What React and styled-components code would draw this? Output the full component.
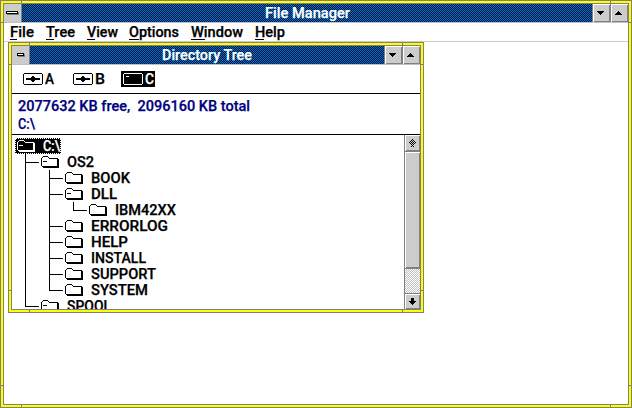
import React from "react";
import styled, { createGlobalStyle, css } from "styled-components";

const Global = createGlobalStyle`
  *{box-sizing:border-box}
  body{margin:0;background:#fff;color:#000;font:500 14px Roboto,"Liberation Sans",sans-serif;overflow:hidden}
`;
const dither = css`
  background: repeating-conic-gradient(#000080 0 25%, #008080 0 50%) 0 0 / 2px 2px;
`;
const Frame = styled.section`
  position: relative;
  display: flex;
  flex-direction: column;
  width: ${p => p.$w}px;
  height: ${p => p.$h}px;
  border: 1px solid #808080;
  box-shadow: inset 0 0 0 2px #ff0, inset 0 0 0 3px #808080;
  padding: 3px;
  background: #fff;
`;
const Notch = styled.i`
  position: absolute;
  background: #808080;
  ${p => p.$v ? "width:1px;height:3px;" : "width:3px;height:1px;"}
  ${p => p.$top !== undefined && `top:${p.$top}px;`}
  ${p => p.$bottom !== undefined && `bottom:${p.$bottom}px;`}
  ${p => p.$left !== undefined && `left:${p.$left}px;`}
  ${p => p.$right !== undefined && `right:${p.$right}px;`}
`;
const TitleBar = styled.header`
  display: flex;
  flex: none;
  height: 19px;
  border-bottom: 1px solid #c0c0c0;
`;
const SystemBox = styled.div`
  width: 18px;
  background: #ccc;
  border-right: 1px solid #808080;
  svg { display: block; }
`;
const Title = styled.div`
  flex: 1;
  display: flex;
  justify-content: center;
  color: #fff;
  ${dither}
`;
const TitleButton = styled.div`
  width: 18px;
  height: 18px;
  background: #ccc;
  border-left: 1px solid #808080;
  box-shadow: inset 1px 1px #fff, inset -1px -1px #808080;
  svg { display: block; }
`;
const MenuBar = styled.nav`
  display: flex;
  flex: none;
  height: 19px;
  padding-left: 6px;
  border-bottom: 1px solid #ccc;
`;
const MenuItem = styled.div`
  width: ${p => p.$w}px;
  height: 18px;
`;
const Label = styled.svg`
  display: block;
  flex: none;
  overflow: visible;
  text {
    font: 500 14px Roboto, "Liberation Sans", sans-serif;
    fill: currentColor;
    stroke: currentColor;
    stroke-width: 0.25px;
  }
`;
const Workspace = styled.main`
  flex: 1;
  padding-left: 4px;
`;
const DriveBar = styled.div`
  display: flex;
  flex: none;
  height: 29px;
  padding: 6px 0 0 9px;
  border-bottom: 1px solid #000;
`;
const Drive = styled.div`
  display: flex;
  gap: 2px;
  width: ${p => p.$w}px;
  height: 16px;
  padding-left: 2px;
  color: ${p => p.$selected ? "#fff" : "#000"};
  background: ${p => p.$selected ? "#000" : "transparent"};
  svg { flex: none; }
`;
const Info = styled.div`
  flex: none;
  height: 41px;
  padding: 4px 0 0 6px;
  border-bottom: 1px solid #000;
  color: #000080;
`;
const InfoLine = styled.div`
  height: 18px;
`;
const TreePane = styled.div`
  display: flex;
  flex: 1;
  min-height: 0;
`;
const Tree = styled.div`
  flex: 1;
  overflow: hidden;
  padding: 3px 0 0 3px;
`;
const Row = styled.div`
  display: flex;
  height: 16px;
`;
const Guide = styled.svg`
  display: block;
  flex: none;
`;
const Entry = styled.div`
  display: flex;
  height: 16px;
  ${p => p.$selected && `
    width:46px;background:#000;color:#fff;
    outline:1px dotted #fff;outline-offset:-1px;
  `}
`;
const ScrollBar = styled.aside`
  display: flex;
  flex-direction: column;
  width: 16px;
  border-left: 1px solid #808080;
`;
const ScrollButton = styled.div`
  flex: none;
  height: ${p => p.$end ? 15 : 17}px;
  background: #ccc;
  border-bottom: ${p => p.$end ? 0 : 1}px solid #808080;
  box-shadow: inset 1px 1px #fff, inset -1px -1px #808080;
  svg { display: block; }
`;
const Thumb = styled.div`
  height: 117px;
  background: #ccc;
  border-bottom: 1px solid #808080;
  box-shadow: inset 1px 1px #fff, inset -1px -1px #808080;
`;
const Track = styled.div`
  flex: 1;
  background: repeating-conic-gradient(#c0c0c0 0 25%, #fff 0 50%) 0 0 / 2px 2px;
  border-bottom: 1px solid #808080;
`;

function Text({ children, width, height = 18, y = 14, underline }) {
  return (
    <Label width={width} height={height}>
      <text x="0" y={y} textLength={width} lengthAdjust="spacingAndGlyphs">{children}</text>
      {underline && <path d={`M0 16.5h${underline}`} stroke="currentColor" shapeRendering="crispEdges" />}
    </Label>
  );
}

function System({ small }) {
  return (
    <SystemBox>
      <svg width="17" height="18" shapeRendering="crispEdges">
        {small ? <>
          <path d="M6 8h7v3H6z" fill="#808080" />
          <path d="M5 7h7v3H5z" /><path d="M6 8h5v1H6z" fill="#fff" />
        </> : <>
          <path d="M3 8h12v3H3z" fill="#808080" />
          <path d="M2 7h12v3H2z" /><path d="M3 8h10v1H3z" fill="#fff" />
        </>}
      </svg>
    </SystemBox>
  );
}

function Arrow({ up }) {
  return (
    <TitleButton>
      <svg width="16" height="18" shapeRendering="crispEdges">
        <path d={up ? "M7 7h1v1h1v1h1v1h1v1H4v-1h1V9h1V8h1z" : "M4 7h7v1h-1v1H9v1H8v1H7v-1H6V9H5V8H4z"} />
      </svg>
    </TitleButton>
  );
}

function FolderIcon({ open }) {
  return (
    <Guide width="18" height="16" shapeRendering="crispEdges" fill="none" stroke="currentColor">
      <path d="M2 2.5h5M1 3.5h1M7 3.5h1M8 4.5h9M.5 4v8M16.5 5v8M17.5 5v9M1 12.5h16M2 13.5h16" />
      {open && <path d="M2 7.5h4" />}
    </Guide>
  );
}

function DriveIcon({ hard }) {
  return (
    <svg width="20" height="16" shapeRendering="crispEdges" fill="none" stroke="currentColor">
      <path d="M1 2.5h18M1 13.5h18M.5 3v10M19.5 3v10" />
      {hard ? <path d="M3 5.5h3" /> : <>
        <path d="M3 8h14" strokeWidth="2" />
        <path d="M8 6.5h4M8 9.5h4M9 5.5h2M9 10.5h2" />
      </>}
    </svg>
  );
}

function Notches() {
  return <>
    <Notch $left={0} $top={21} /><Notch $right={0} $top={21} />
    <Notch $left={0} $bottom={21} /><Notch $right={0} $bottom={21} />
    <Notch $v $left={20} $top={0} /><Notch $v $right={20} $top={0} />
    <Notch $v $left={20} $bottom={0} /><Notch $v $right={20} $bottom={0} />
  </>;
}

const menu = [
  ["File", 36, 24, 7], ["Tree", 41, 29, 8], ["View", 42, 31, 8],
  ["Options", 62, 50, 10], ["Window", 64, 52, 14], ["Help", 30, 30, 9],
];
const nodes = [
  ["OS2", 1, 27, true], ["BOOK", 2, 39], ["DLL", 2, 26, true], ["IBM42XX", 3, 61],
  ["ERRORLOG", 2, 77], ["HELP", 2, 37], ["INSTALL", 2, 55], ["SUPPORT", 2, 65],
  ["SYSTEM", 2, 57], ["SPOOL", 1, 44, true],
];
const lastChildren = ["SPOOL", "SYSTEM", "IBM42XX"];

function TreeRow({ name, level, width, open }) {
  const x = 10.5 + (level - 1) * 24;
  return (
    <Row>
      <Guide width={level * 24 + 2} height="16" shapeRendering="crispEdges" stroke="#000" fill="none">
        {level > 1 && <path d="M10.5 0v16" />}
        {level > 2 && <path d="M34.5 0v16" />}
        <path d={`M${x} 0v${lastChildren.includes(name) ? 9 : 16}M${x} 8.5h13`} />
      </Guide>
      <FolderIcon open={open} />
      <Entry><Guide width="8" height="16" /><Text width={width} height={16} y={13}>{name}</Text></Entry>
    </Row>
  );
}

function DirectoryWindow() {
  return (
    <Frame $w={416} $h={271}>
      <TitleBar><System small /><Title><Text width={90}>Directory Tree</Text></Title><Arrow /><Arrow up /></TitleBar>
      <DriveBar>
        <Drive $w={50}><DriveIcon /><Text width={9} height={16} y={13}>A</Text></Drive>
        <Drive $w={50}><DriveIcon /><Text width={10} height={16} y={13}>B</Text></Drive>
        <Drive $w={34} $selected><DriveIcon hard /><Text width={9} height={16} y={13}>C</Text></Drive>
      </DriveBar>
      <Info>
        <InfoLine><Text width={232} y={13}>{"2077632 KB free,\u00a0 2096160 KB total"}</Text></InfoLine>
        <InfoLine><Text width={17} y={13}>C:\</Text></InfoLine>
      </Info>
      <TreePane>
        <Tree>
          <Entry $selected>
            <Guide width="2" height="16" /><FolderIcon open /><Guide width="8" height="16" />
            <Text width={17} height={16} y={13}>C:\</Text>
          </Entry>
          {nodes.map(([name, level, width, open]) => <TreeRow key={name} {...{ name, level, width, open }} />)}
        </Tree>
        <ScrollBar>
          <ScrollButton>
            <svg width="15" height="16" shapeRendering="crispEdges" stroke="#000">
              <path d="M7 4.5h1M6 5.5h1M8 5.5h1M5 6.5h1M7 6.5h1M9 6.5h1M4 7.5h1M6 7.5h1M8 7.5h1M10 7.5h1M5 8.5h1M7 8.5h1M9 8.5h1M6 9.5h1M8 9.5h1M7 10.5h1M6 11.5h1M8 11.5h1" />
            </svg>
          </ScrollButton>
          <Thumb /><Track />
          <ScrollButton $end>
            <svg width="15" height="15" shapeRendering="crispEdges"><path d="M6 4h3v3h2v1h-1v1H9v1H8v1H7v-1H6V9H5V8H4V7h2z" /></svg>
          </ScrollButton>
        </ScrollBar>
      </TreePane>
      <Notches />
    </Frame>
  );
}

export default function App() {
  return <>
    <Global />
    <Frame $w={632} $h={408}>
      <TitleBar><System /><Title><Text width={85}>File Manager</Text></Title><Arrow /><Arrow up /></TitleBar>
      <MenuBar>{menu.map(([name, step, width, underline]) =>
        <MenuItem key={name} $w={step}><Text width={width} underline={underline}>{name}</Text></MenuItem>)}
      </MenuBar>
      <Workspace><DirectoryWindow /></Workspace>
      <Notches />
    </Frame>
  </>;
}
